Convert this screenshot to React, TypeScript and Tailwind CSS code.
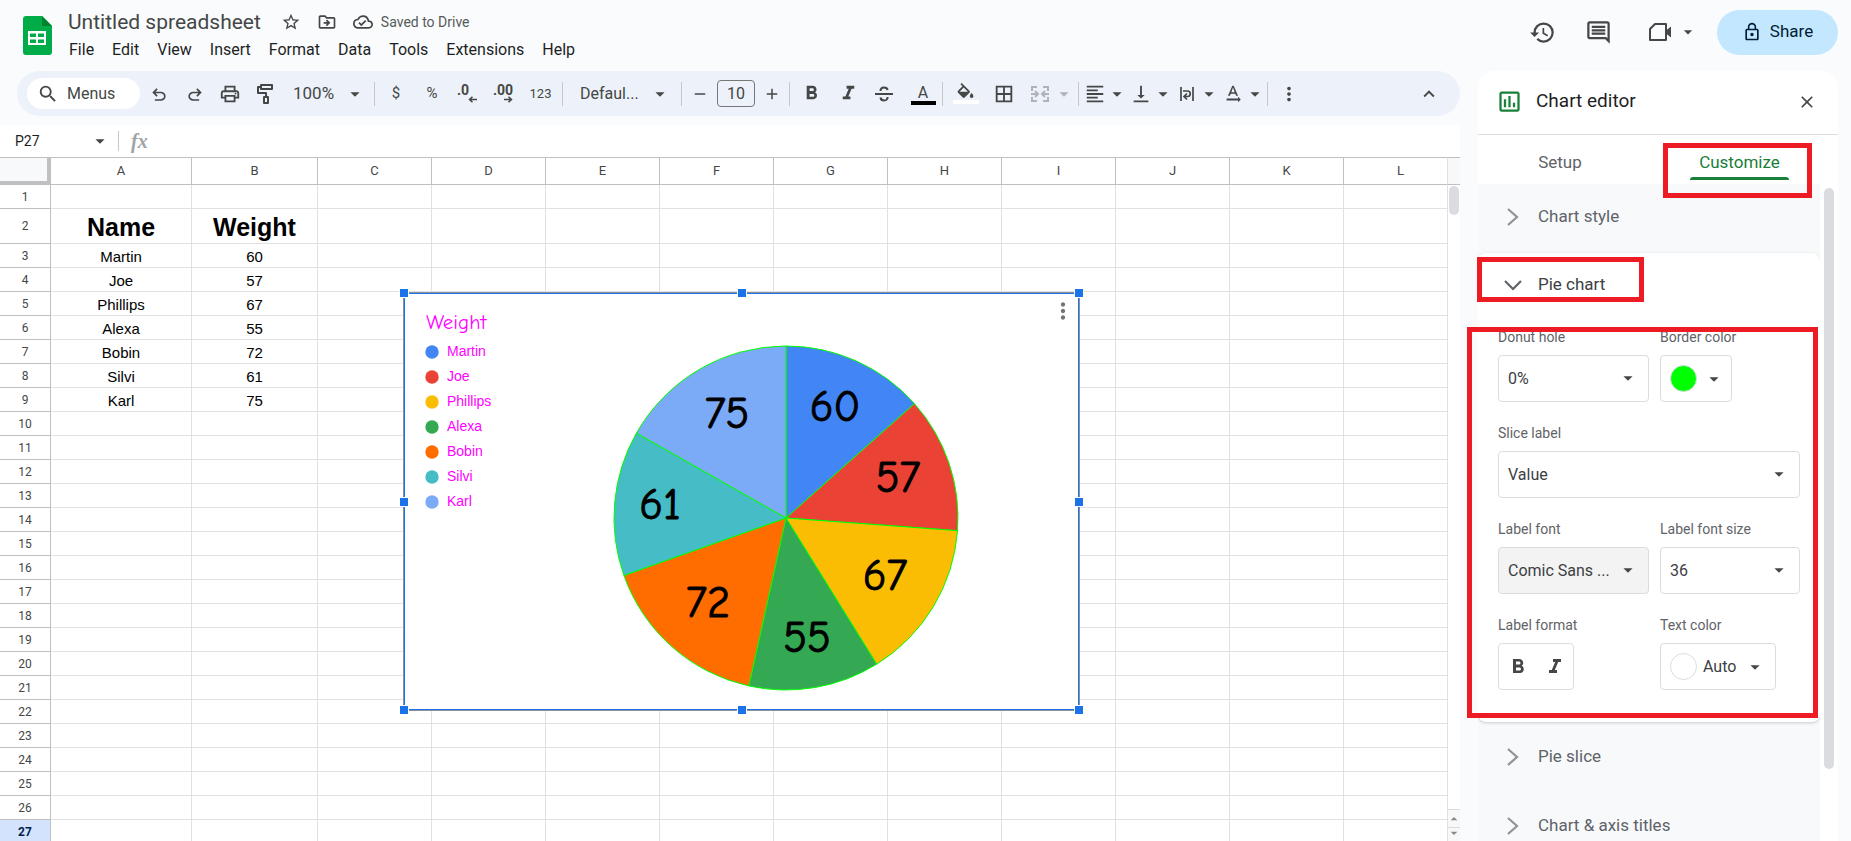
import React from "react";
import type { ReactNode } from "react";
import {
  MdStarBorder,
  MdOutlineDriveFileMove,
  MdOutlineCloudDone,
  MdSearch,
  MdOutlinePrint,
  MdArrowDropDown,
  MdArrowDropUp,
  MdRemove,
  MdAdd,
  MdFormatBold,
  MdFormatItalic,
  MdFormatColorFill,
  MdBorderAll,
  MdFormatAlignLeft,
  MdVerticalAlignBottom,
  MdTextRotationNone,
  MdMoreVert,
  MdKeyboardArrowUp,
  MdHistory,
  MdOutlineComment,
  MdLockOutline,
  MdOutlineAssessment,
  MdClose,
} from "react-icons/md";

const UNDO = "M7 19v-2h7.1q1.575 0 2.738-1T18 13.500T16.838 11T14.100 10H7.800l2.600 2.600L9 14L4 9l5-5l1.400 1.400L7.800 8h6.300q2.425 0 4.163 1.575T20 13.500t-1.737 3.925T14.100 19z";

const COLUMNS = ["A", "B", "C", "D", "E", "F", "G", "H", "I", "J", "K", "L"];
const ROWS = Array.from({ length: 27 }, (_, i) => i + 1);

const DATA = [
  { name: "Martin", weight: 60, color: "#4285f4", lx: 430, ly: 127 },
  { name: "Joe", weight: 57, color: "#ea4335", lx: 493, ly: 198 },
  { name: "Phillips", weight: 67, color: "#fbbc04", lx: 480, ly: 296 },
  { name: "Alexa", weight: 55, color: "#34a853", lx: 402, ly: 358 },
  { name: "Bobin", weight: 72, color: "#ff6d01", lx: 303, ly: 323 },
  { name: "Silvi", weight: 61, color: "#46bdc6", lx: 255, ly: 225 },
  { name: "Karl", weight: 75, color: "#7baaf7", lx: 322, ly: 134 },
];

const CX = 381;
const CY = 224;
const R = 172;

function pieSlices() {
  const total = DATA.reduce((s, d) => s + d.weight, 0);
  let acc = 0;
  return DATA.map((d) => {
    const a0 = (acc / total) * Math.PI * 2;
    acc += d.weight;
    const a1 = (acc / total) * Math.PI * 2;
    const p = (a: number) => `${(CX + R * Math.sin(a)).toFixed(2)} ${(CY - R * Math.cos(a)).toFixed(2)}`;
    return { ...d, path: `M${CX} ${CY}L${p(a0)}A${R} ${R} 0 0 1 ${p(a1)}Z` };
  });
}

function Tool({ label, className, children }: { label: string; className?: string; children: ReactNode }) {
  return (
    <button type="button" aria-label={label} className={`flex shrink-0 items-center justify-center ${className ?? ""}`}>
      {children}
    </button>
  );
}

function Divider() {
  return <div className="h-6 w-px shrink-0 bg-[#c7c7c7]" />;
}

function SheetsLogo() {
  return (
    <svg width="29" height="39" viewBox="0 0 29 39" aria-hidden="true">
      <path d="M3 0h16l10 10v26a3 3 0 0 1-3 3H3a3 3 0 0 1-3-3V3a3 3 0 0 1 3-3z" fill="#00ac47" />
      <path d="M19 0l10 10H19z" fill="#00832d" />
      <path fillRule="evenodd" d="M5 15h18v14H5zM7 17.500v3.500h6v-3.500zM15 17.500v3.500h6v-3.500zM7 23.500v3.500h6v-3.500zM15 23.500v3.500h6v-3.500z" fill="#fff" />
    </svg>
  );
}

function Header() {
  return (
    <header className="flex h-[71px] justify-between pl-[23px] pr-[13px]">
      <div className="flex">
        <a href="#home" aria-label="Sheets home" className="mt-4 h-10">
          <SheetsLogo />
        </a>
        <div className="flex flex-col pl-4">
          <div className="flex h-[42px] items-center pt-[2px]">
            <h1 className="text-[21px] leading-6 text-[#444746]">Untitled spreadsheet</h1>
            <div className="flex items-center gap-4 pl-5 text-[20px] text-[#444746]">
              <Tool label="Star"><MdStarBorder /></Tool>
              <Tool label="Move"><MdOutlineDriveFileMove /></Tool>
              <Tool label="Document status"><MdOutlineCloudDone /></Tool>
            </div>
            <span className="pl-2 text-[14px] text-[#575a59]">Saved to Drive</span>
          </div>
          <nav className="flex gap-[18px] pl-px text-[16px] leading-4 text-[#1f1f1f]">
            {["File", "Edit", "View", "Insert", "Format", "Data", "Tools", "Extensions", "Help"].map((m) => (
              <button key={m} type="button">{m}</button>
            ))}
          </nav>
        </div>
      </div>
      <div className="flex h-16 items-center text-[#444746]">
        <Tool label="Version history" className="mr-[29px]"><MdHistory size={27} /></Tool>
        <Tool label="Comments" className="mr-[36px]"><MdOutlineComment size={27} /></Tool>
        <Tool label="Join a call" className="mr-[19px]">
          <svg width="24" height="20" viewBox="0 0 24 20" fill="none" aria-hidden="true">
            <path d="M7 2h11v16H2V7z" stroke="currentColor" strokeWidth="2" strokeLinejoin="round" />
            <path d="M18 8.500l5-4v11l-5-4z" fill="currentColor" />
          </svg>
          <MdArrowDropDown size={20} className="ml-[6px]" />
        </Tool>
        <button type="button" className="flex h-[45px] w-[121px] items-center justify-center gap-2 rounded-full bg-[#c2e7ff] text-[17px] text-[#001d35]">
          <MdLockOutline size={20} />
          Share
        </button>
      </div>
    </header>
  );
}

function Toolbar() {
  return (
    <div role="toolbar" className="ml-[17px] flex h-[45px] items-center rounded-full bg-[#edf2fa] pl-[10px] text-[#444746]">
      <button type="button" className="flex h-[31px] w-[113px] shrink-0 items-center gap-2 rounded-full bg-white pl-[10px] text-[16px]">
        <MdSearch size={22} />
        Menus
      </button>
      <Tool label="Undo" className="w-[37px] pt-[2px]">
        <svg width="20" height="20" viewBox="0 0 24 24" fill="currentColor" aria-hidden="true"><path d={UNDO} /></svg>
      </Tool>
      <Tool label="Redo" className="w-[35px] pt-[2px]">
        <svg width="20" height="20" viewBox="0 0 24 24" fill="currentColor" aria-hidden="true"><path d={UNDO} transform="translate(24 0) scale(-1 1)" /></svg>
      </Tool>
      <Tool label="Print" className="w-[36px]"><MdOutlinePrint size={22} /></Tool>
      <Tool label="Paint format" className="w-[34px]">
        <svg width="18" height="21" viewBox="0 0 18 21" fill="none" stroke="currentColor" strokeWidth="2" aria-hidden="true">
          <path d="M5 2h11v4H5zM5 4H2v6h8v4M8 14h4v6H8z" strokeLinejoin="round" />
        </svg>
      </Tool>
      <button type="button" className="flex w-[92px] shrink-0 items-center justify-between pl-[11px] pr-[8px] text-[17px]">
        100% <MdArrowDropDown size={22} />
      </button>
      <Divider />
      <Tool label="Format as currency" className="w-[42px] text-[15px]">$</Tool>
      <Tool label="Format as percent" className="w-[30px] text-[15px]">%</Tool>
      <Tool label="Decrease decimal places" className="w-[40px]">
        <span className="flex flex-col items-end text-[14px] font-bold leading-3">
          <span className="pr-2">.0</span>
          <svg width="9" height="7" viewBox="0 0 9 7" fill="none" stroke="currentColor" strokeWidth="1.500" aria-hidden="true"><path d="M9 3.500H1.500M4.500 .7L1.500 3.500l3 2.800" /></svg>
        </span>
      </Tool>
      <Tool label="Increase decimal places" className="w-[32px]">
        <span className="flex flex-col items-end text-[14px] font-bold leading-3">
          <span>.00</span>
          <svg width="9" height="7" viewBox="0 0 9 7" fill="none" stroke="currentColor" strokeWidth="1.500" aria-hidden="true"><path d="M0 3.500h7.500M4.500 .7l3 2.800l-3 2.800" /></svg>
        </span>
      </Tool>
      <Tool label="More formats" className="w-[43px] text-[13px]">123</Tool>
      <Divider />
      <button type="button" className="flex w-[118px] shrink-0 items-center justify-between pl-[17px] pr-[10px] text-[16px]">
        Defaul... <MdArrowDropDown size={22} />
      </button>
      <Divider />
      <Tool label="Decrease font size" className="w-[35px]"><MdRemove size={18} /></Tool>
      <input aria-label="Font size" defaultValue="10" className="h-[27px] w-[38px] shrink-0 rounded border border-[#747775] text-center text-[16px]" />
      <Tool label="Increase font size" className="w-[34px]"><MdAdd size={18} /></Tool>
      <Divider />
      <Tool label="Bold" className="w-[42px]"><MdFormatBold size={23} /></Tool>
      <Tool label="Italic" className="w-[32px]"><MdFormatItalic size={23} /></Tool>
      <Tool label="Strikethrough" className="w-[40px]">
        <svg width="20" height="18" viewBox="0 0 20 18" fill="none" stroke="currentColor" strokeWidth="2" aria-hidden="true">
          <path d="M1 9h18M6.500 6C6.500 3.500 8 2.500 10 2.500s3.300 1 3.600 2.500M6.500 12.500c.3 2 1.700 3 3.500 3c2.200 0 3.700-1.200 3.600-3.500" />
        </svg>
      </Tool>
      <Tool label="Text color" className="w-[38px] flex-col pt-[2px]">
        <span className="text-[16px] leading-4">A</span>
        <span className="h-1 w-[25px] bg-black" />
      </Tool>
      <Divider />
      <Tool label="Fill color" className="w-[45px] flex-col">
        <MdFormatColorFill size={21} />
        <span className="-mt-1 h-1 w-[26px] bg-white" />
      </Tool>
      <Tool label="Borders" className="w-[32px]"><MdBorderAll size={22} /></Tool>
      <Tool label="Merge cells" className="w-[58px] pl-[8px] text-[#b0b3b8]">
        <svg width="18" height="16" viewBox="0 0 18 16" fill="none" stroke="currentColor" strokeWidth="2" aria-hidden="true">
          <path d="M6 1H1v4M12 1h5v4M6 15H1v-4M12 15h5v-4M0 8h6M4 5l3 3l-3 3M18 8h-6M14 5l-3 3l3 3" />
        </svg>
        <MdArrowDropDown size={22} className="ml-1" />
      </Tool>
      <Divider />
      <Tool label="Horizontal align" className="w-[50px] pl-1"><MdFormatAlignLeft size={22} /><MdArrowDropDown size={22} /></Tool>
      <Tool label="Vertical align" className="w-[46px]"><MdVerticalAlignBottom size={22} /><MdArrowDropDown size={22} /></Tool>
      <Tool label="Text wrapping" className="w-[46px]">
        <svg width="22" height="22" viewBox="0 0 22 22" fill="none" stroke="currentColor" strokeWidth="1.700" aria-hidden="true">
          <path d="M5 4v14M17 4v14M7 8h4.500a2.700 2.700 0 0 1 0 5.500H8.500M11 10.500l-3 3l3 3" />
        </svg>
        <MdArrowDropDown size={22} />
      </Tool>
      <Tool label="Text rotation" className="w-[46px]"><MdTextRotationNone size={22} /><MdArrowDropDown size={22} /></Tool>
      <Divider />
      <Tool label="More" className="w-[42px]"><MdMoreVert size={22} /></Tool>
      <Tool label="Hide the menus" className="ml-auto mr-5"><MdKeyboardArrowUp size={22} /></Tool>
    </div>
  );
}

function FormulaBar() {
  return (
    <div className="mt-[9px] flex h-8 items-center bg-white font-['Roboto','Liberation_Sans',sans-serif]">
      <input aria-label="Name box" defaultValue="P27" className="w-[76px] shrink-0 bg-transparent pl-[15px] text-[14px] text-[#1f1f1f]" />
      <Tool label="Named ranges" className="ml-[13px] text-[#444746]"><MdArrowDropDown size={22} /></Tool>
      <div className="ml-[7px] h-5 w-px bg-[#c7c7c7]" />
      <label htmlFor="formula" className="pl-3 font-['Liberation_Serif',serif] text-[20px] font-bold italic text-[#a0a3a6]">fx</label>
      <input id="formula" className="min-w-0 flex-1 bg-transparent pl-3 text-[14px] outline-none" />
    </div>
  );
}

function Grid() {
  return (
    <table className="w-full table-fixed border-separate border-spacing-0 text-center font-['Roboto','Liberation_Sans',sans-serif]">
      <colgroup>
        <col className="w-[51px]" />
        <col className="w-[141px]" />
        <col className="w-[126px]" />
        {COLUMNS.slice(2, 11).map((c) => (
          <col key={c} className="w-[114px]" />
        ))}
        <col />
      </colgroup>
      <thead>
        <tr className="h-7">
          <th className="border-b-4 border-r-4 border-t border-[#c0c0c0] bg-[#f8f9fa] p-0" aria-label="Select all" />
          {COLUMNS.map((c) => (
            <th key={c} scope="col" className={`border-b border-t border-r border-[#c0c0c0] p-0 text-[13px] font-normal leading-4 text-[#444746] ${c === "L" ? "pl-[10px] border-r-[#e1e1e1]" : ""}`}>
              {c}
            </th>
          ))}
        </tr>
      </thead>
      <tbody>
        {ROWS.map((r) => {
          const d = r >= 3 && r <= 9 ? DATA[r - 3] : null;
          return (
            <tr key={r} className={r === 2 ? "h-[35px]" : "h-6"}>
              <th scope="row" className={`border-b border-r border-[#c0c0c0] p-0 text-[12px] leading-4 ${r === 27 ? "bg-[#d3e3fd] font-bold text-[#041e49]" : "font-normal text-[#444746]"}`}>
                {r}
              </th>
              {COLUMNS.map((c) => (
                <td
                  key={c}
                  className={`border-b border-r border-[#e1e1e1] p-0 font-['Liberation_Sans',Arial,sans-serif] text-black ${r === 2 ? "pt-[2px] text-[25px] font-bold leading-[30px]" : "pt-[2px] text-[15px] leading-5"}`}
                >
                  {r === 2 && c === "A" && "Name"}
                  {r === 2 && c === "B" && "Weight"}
                  {d && c === "A" && d.name}
                  {d && c === "B" && d.weight}
                </td>
              ))}
            </tr>
          );
        })}
      </tbody>
    </table>
  );
}

const HANDLES = [
  "-left-[6px] -top-[6px]",
  "left-[332px] -top-[6px]",
  "-right-[6px] -top-[6px]",
  "-left-[6px] top-[203px]",
  "-right-[6px] top-[203px]",
  "-left-[6px] -bottom-[6px]",
  "left-[332px] -bottom-[6px]",
  "-right-[6px] -bottom-[6px]",
];

function ChartObject() {
  return (
    <section aria-label="Weight chart" className="absolute left-[404px] top-[136px] h-[417px] w-[675px] border border-[#1a73e8] bg-white shadow-[0_0_0_1px_#8c9196]">
      <h2 className="pl-[21px] pt-4 font-['Comic_Sans_MS','Comic_Neue','Lato',sans-serif] text-[21px] leading-6 text-[#ff00ff]">Weight</h2>
      <ul className="flex flex-col pl-5 pt-[5px] font-['Liberation_Sans',Arial,sans-serif] text-[14px] text-[#ff00ff]">
        {DATA.map((d) => (
          <li key={d.name} className="flex h-[25px] items-center gap-[8px]">
            <svg width="14" height="14" aria-hidden="true"><circle cx="7" cy="7" r="6.700" fill={d.color} /></svg>
            {d.name}
          </li>
        ))}
      </ul>
      <svg className="pointer-events-none absolute inset-0" width="673" height="415" viewBox="0 0 673 415" role="img" aria-label="Pie chart of weight">
        {pieSlices().map((s) => (
          <path key={s.name} d={s.path} fill={s.color} stroke="#00ff00" strokeWidth="1" />
        ))}
        {DATA.map((s) => (
          <text key={s.name} x={s.lx} y={s.ly} textAnchor="middle" stroke="#000" strokeWidth="1" className="font-['Comic_Sans_MS','Comic_Neue','Lato',sans-serif] text-[44px]">{s.weight}</text>
        ))}
      </svg>
      <button type="button" aria-label="Chart options" className="absolute right-[2px] top-[4px] text-[#757575]">
        <MdMoreVert size={26} />
      </button>
      {HANDLES.map((h) => (
        <span key={h} className={`absolute size-[10px] border border-white bg-[#1a73e8] ${h}`} />
      ))}
    </section>
  );
}

function Sheet() {
  return (
    <div className="flex min-h-0 flex-1 bg-white">
      <div className="relative min-w-0 flex-1 overflow-hidden">
        <Grid />
        <ChartObject />
      </div>
      <div className="flex w-[12px] shrink-0 flex-col">
        <div className="h-7 border-b border-t border-[#c0c0c0] bg-[#f8f8f8]" />
        <div className="mx-px mt-px h-[29px] rounded-full bg-[#dadce0]" />
        <div className="mt-auto flex h-[18px] items-center justify-center border-t border-[#dadce0] bg-[#f8f8f8] text-[#888]"><MdArrowDropUp size={16} className="shrink-0" /></div>
        <div className="flex h-[14px] items-end justify-center overflow-hidden border-t border-[#dadce0] bg-[#f8f8f8] text-[#888]"><MdArrowDropDown size={16} className="shrink-0" /></div>
      </div>
    </div>
  );
}

function Accordion({ title, open }: { title: string; open?: boolean }) {
  return (
    <button type="button" aria-expanded={!!open} className={`flex w-full items-center text-left text-[17px] ${open ? "h-[64px] text-[#3c4043]" : "h-[69px] text-[#5f6368]"}`}>
      <span className="flex w-[60px] justify-center pl-[9px]">
        <svg width="18" height="18" viewBox="0 0 18 18" fill="none" stroke={open ? "#5f6368" : "#909396"} strokeWidth="2.200" aria-hidden="true">
          <path d={open ? "M1 5l8 8l8-8" : "M4 1l9 8l-9 8"} />
        </svg>
      </span>
      {title}
    </button>
  );
}

function SelectField({ id, label, value, className, selectClass }: { id: string; label: string; value: string; className?: string; selectClass?: string }) {
  return (
    <div className={className}>
      <label htmlFor={id} className="block h-[27px] text-[14px] leading-[18px] text-[#5f6368]">{label}</label>
      <div className="relative">
        <select id={id} className={`h-[47px] w-full appearance-none rounded border border-[#dadce0] pl-[9px] text-[16px] text-[#3c4043] ${selectClass ?? "bg-white"}`}>
          <option>{value}</option>
        </select>
        <MdArrowDropDown size={22} className="pointer-events-none absolute right-[10px] top-3 text-[#444746]" />
      </div>
    </div>
  );
}

function PieChartSettings() {
  return (
    <div className="h-[469px] rounded-lg bg-white shadow-[0_1px_3px_rgba(60,64,67,0.25)]">
      <Accordion title="Pie chart" open />
      <div className="flex flex-col gap-[22px] pl-5 pr-5 pt-[11px] font-['Roboto','Liberation_Sans',sans-serif]">
        <div className="flex gap-[11px]">
          <SelectField id="donut" label="Donut hole" value="0%" className="w-[151px]" />
          <div>
            <span className="block h-[27px] text-[14px] leading-[18px] text-[#5f6368]">Border color</span>
            <button type="button" aria-label="Border color" className="flex h-[47px] w-[72px] items-center justify-between rounded border border-[#dadce0] pl-[9px] pr-[6px] text-[#444746]">
              <span className="size-[27px] rounded-full border border-[#dadce0] bg-[#00ff00]" />
              <MdArrowDropDown size={22} />
            </button>
          </div>
        </div>
        <SelectField id="slice" label="Slice label" value="Value" />
        <div className="flex gap-[11px]">
          <SelectField id="font" label="Label font" value="Comic Sans ..." className="w-[151px]" selectClass="bg-[#f3f3f3]" />
          <SelectField id="size" label="Label font size" value="36" className="flex-1" />
        </div>
        <div className="flex">
          <div className="w-[162px]">
            <span className="block h-[27px] text-[14px] leading-[18px] text-[#5f6368]">Label format</span>
            <div className="flex h-[47px] w-[76px] items-center justify-around rounded border border-[#dadce0] text-[#444746]">
              <button type="button" aria-label="Bold"><MdFormatBold size={24} /></button>
              <button type="button" aria-label="Italic"><MdFormatItalic size={24} /></button>
            </div>
          </div>
          <div>
            <span className="block h-[27px] text-[14px] leading-[18px] text-[#5f6368]">Text color</span>
            <button type="button" className="flex h-[47px] w-[116px] items-center gap-[6px] rounded border border-[#dadce0] pl-[9px] text-[16px] text-[#3c4043]">
              <span className="size-[27px] rounded-full border border-[#dadce0] bg-white" />
              Auto
              <MdArrowDropDown size={22} className="ml-[2px] text-[#444746]" />
            </button>
          </div>
        </div>
      </div>
    </div>
  );
}

function Highlight({ className }: { className: string }) {
  return <div className={`pointer-events-none absolute border-[5px] border-[#ed1c24] ${className}`} />;
}

function ChartEditor() {
  return (
    <aside className="relative flex min-h-0 w-[360px] shrink-0 flex-col rounded-t-[16px] bg-white">
      <div className="flex h-16 shrink-0 items-center border-b border-[#dadce0] pb-[2px] pl-2 pr-[21px]">
        <span className="flex w-[50px] pl-[10px] text-[#188038]"><MdOutlineAssessment size={27} /></span>
        <h2 className="flex-1 text-[19px] text-[#1f1f1f]">Chart editor</h2>
        <Tool label="Close" className="text-[#444746]"><MdClose size={20} /></Tool>
      </div>
      <div role="tablist" className="flex h-[49px] shrink-0 pl-[38px] text-[17px]">
        <button type="button" role="tab" aria-selected="false" className="flex w-[88px] justify-center pt-[15px] leading-6 text-[#5f6368]">Setup</button>
        <button type="button" role="tab" aria-selected="true" className="ml-[86px] flex w-[99px] flex-col items-center pt-[15px] leading-6 text-[#188038]">
          Customize
          <span className="mt-[3px] h-[3px] w-full rounded-t bg-[#188038]" />
        </button>
      </div>
      <div className="flex min-h-0 flex-1">
        <div className="w-[342px] overflow-hidden bg-[#f8f9fb]">
          <div className="-mt-[2px] pb-[2px]"><Accordion title="Chart style" /></div>
          <PieChartSettings />
          <Accordion title="Pie slice" />
          <Accordion title="Chart & axis titles" />
        </div>
        <div className="ml-1 mt-1 h-[581px] w-[10px] rounded-full bg-[#dadce0]" />
      </div>
      <Highlight className="left-[185px] top-[72px] h-[55px] w-[149px]" />
      <Highlight className="-left-px top-[186px] h-[45px] w-[167px]" />
      <Highlight className="-left-[11px] top-[256px] h-[391px] w-[351px]" />
    </aside>
  );
}

export default function App() {
  return (
    <div className="flex h-screen flex-col overflow-hidden bg-[#f9fbfd] font-['Google_Sans','Roboto','Liberation_Sans',sans-serif]">
      <Header />
      <div className="flex min-h-0 flex-1">
        <main className="flex min-w-0 flex-1 flex-col">
          <Toolbar />
          <FormulaBar />
          <Sheet />
        </main>
        <div className="ml-[18px] mr-[13px] flex min-h-0">
          <ChartEditor />
        </div>
      </div>
    </div>
  );
}
